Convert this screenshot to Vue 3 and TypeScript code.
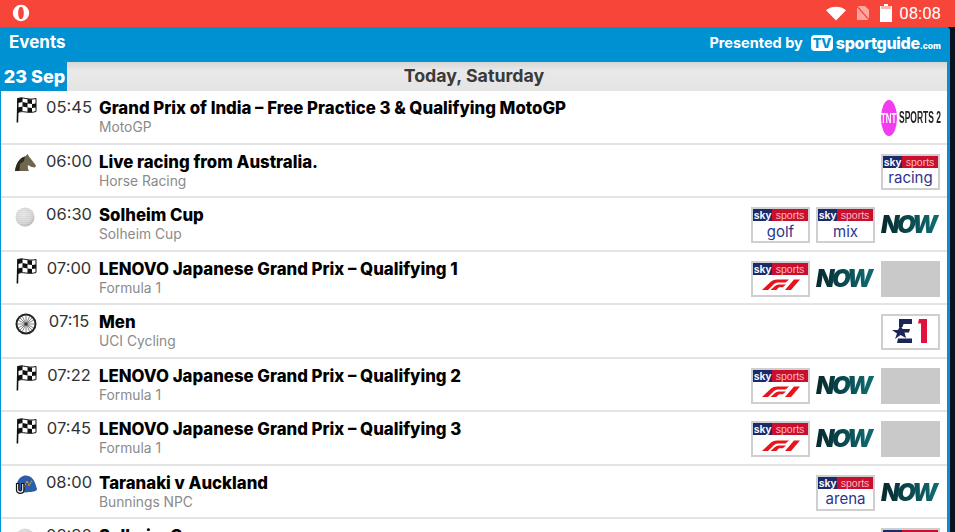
<template>
  <div class="screen">
    <div class="status-bar">
      <svg class="opera" viewBox="0 0 18 18" width="18" height="18">
        <path fill="#fff" fill-rule="evenodd" d="M9 0.800a8.200 8.200 0 1 0 0 16.400a8.200 8.200 0 0 0 0-16.400zM9 2.800c-1.800 0-2.800 2.900-2.800 6.200s1 6.200 2.800 6.200s2.800-2.900 2.800-6.200s-1-6.200-2.800-6.200z" />
      </svg>
      <div class="status-right">
        <svg viewBox="0 0 20 16" width="20" height="16"><path fill="#fff" d="M0 5.200C5.500 0.600 14.500 0.600 20 5.200L10 15.500z" /></svg>
        <svg class="nosim" viewBox="0 0 14 16" width="14" height="16">
          <path fill="#ffa79f" d="M1 1h8l4 4v10H1z" />
          <path stroke="#f4443a" stroke-width="1.200" d="M0 0L14 16" />
        </svg>
        <svg viewBox="0 0 12 18" width="12" height="18"><path fill="#fff" d="M4 0h4v2h4v16H0V2h4z" /><path fill="#ffb5ae" d="M1 2h10v3H1z" /></svg>
        <span class="clock">08:08</span>
      </div>
    </div>

    <div class="panel">
      <header class="panel-head">
        <span class="events">Events</span>
        <div class="presented">
          <span>Presented by</span>
          <span class="tv">TV</span>
          <span class="guide">sportguide<small>.com</small></span>
        </div>
      </header>

      <div class="date-row">
        <div class="date-tag">23 Sep</div>
        <div class="date-title">Today, Saturday</div>
      </div>

      <div v-for="ev in events" :key="ev.time + ev.title" class="event">
        <div class="sport-icon">
          <svg v-if="ev.icon === 'flag'" viewBox="0 0 22 26" width="22" height="26">
            <path d="M3 1L2.400 25.500" stroke="#111" stroke-width="1.600" fill="none" />
            <path fill="#fff" stroke="#111" stroke-width="1" d="M3 1.500C8 -0.500 13 3.500 21 1.500V14.500C13 17 8 13 3 15.500z" />
            <path fill="#111" d="M3 1.500l4.500-1v4.500l-4.500 1zM12.500 2l4.500.400v4.600l-4.500-.500zM7.500 5l5 1v4.500l-5-1zM17 7l4-.500v4l-4 .500zM3 10.500l4.500-1v4.200l-4.500 1.800zM12.500 10.500l4.500.500v4.300l-4.500-.300z" />
          </svg>
          <svg v-else-if="ev.icon === 'horse'" viewBox="0 0 22 20" width="22" height="20">
            <path fill="#6f674d" d="M0 17C1 10 4 4 10 2.500L12.500 0L14 2.500L21 11.500L20 13.500L16.500 13L13 11C12.500 13 13 15.500 14 17z" />
            <path fill="#2e2a20" d="M0 17C1 10 4 4 10 2.500L9 7L5 10L4.500 17z" />
          </svg>
          <svg v-else-if="ev.icon === 'golf'" viewBox="0 0 20 20" width="20" height="20">
            <defs>
              <radialGradient id="ball" cx="40%" cy="35%" r="70%">
                <stop offset="0" stop-color="#fbfbfb" />
                <stop offset="0.7" stop-color="#e6e6e6" />
                <stop offset="1" stop-color="#bdbdbd" />
              </radialGradient>
              <pattern id="dimple" width="2" height="2" patternUnits="userSpaceOnUse">
                <circle cx="1" cy="1" r="0.600" fill="#999" />
              </pattern>
            </defs>
            <circle cx="10" cy="10" r="9.500" fill="url(#ball)" />
            <circle cx="10" cy="10" r="9.500" fill="url(#dimple)" />
          </svg>
          <svg v-else-if="ev.icon === 'wheel'" viewBox="0 0 22 22" width="22" height="22">
            <circle cx="11" cy="11" r="9.500" fill="#fff" stroke="#222" stroke-width="2" />
            <path stroke="#666" stroke-width="0.800" d="M11 2v18M2 11h18M4.600 4.600l12.800 12.800M17.400 4.600L4.600 17.400M7 2.800l8 16.400M15 2.800L7 19.200M2.800 7l16.400 8M19.200 7L2.800 15" />
            <circle cx="11" cy="11" r="1.600" fill="#333" />
          </svg>
          <svg v-else viewBox="0 0 22 20" width="22" height="20">
            <path fill="#2d5da8" d="M2 8C5 -1 13 -1 17 3C20 6 21 11 22 14C22 16 19 17 14 17C10 18 6 17 2 15z" />
            <path fill="none" stroke="#f5a11d" stroke-width="1.300" stroke-dasharray="1.500 1" d="M9 12L12 6L14 10L17 6" />
            <path fill="#fff" stroke="#111" stroke-width="1.200" d="M1.500 8.500h2.300v6c0 2 2.800 2 2.800 0v-6h2.300v6.500c0 4.500-7.400 4.500-7.400 0z" />
          </svg>
        </div>
        <div class="time">{{ ev.time }}</div>
        <div class="info">
          <div class="title">{{ ev.title }}</div>
          <div class="sub">{{ ev.sub }}</div>
        </div>
        <div class="channels">
          <template v-for="(ch, i) in ev.channels" :key="i">
            <div v-if="ch === 'now'" class="logo now"><span>NOW</span></div>
            <div v-else-if="ch === 'blank'" class="logo blank"></div>
            <div v-else-if="ch === 'tnt'" class="logo tnt">
              <span class="tnt-oval"><span class="tnt-word">TNT</span></span>
              <span class="tnt-text">SPORTS 2</span>
            </div>
            <div v-else-if="ch === 'e1'" class="logo boxed e1">
              <svg viewBox="0 0 55 32" width="55" height="32">
                <path fill="#1c2557" d="M16 3H29V8H20.500L19.500 11H16zM15 22.500H29V27H14z" />
                <path fill="#1c2557" d="M9 14H15L17.500 9L19.500 13H27L26 16.500H21.500L23 22L17.500 19L12 23L14 17.500z" />
                <path fill="#e0123d" d="M36 3H44V27H38V7.500H35z" />
              </svg>
            </div>
            <div v-else class="logo boxed sky">
              <div class="sky-top">
                <span class="sky-word">sky</span>
                <span class="sports-word">sports</span>
              </div>
              <div class="sky-name">
                <svg v-if="ch === 'f1'" viewBox="0 0 38 11" width="38" height="11">
                  <path fill="#e8141c" d="M0 11L9 2.500Q11.500 0.500 15 0.500H27L23.500 3.500H15.500Q13.500 3.500 12 5L6 11zM8.500 11L13 7Q14.500 5.500 16.500 5.500H24L20.800 8.300H17L14.300 11zM23 11L32 0.500H38L29 11z" />
                </svg>
                <template v-else>{{ ch }}</template>
              </div>
            </div>
          </template>
        </div>
      </div>
    </div>
  </div>
</template>

<script setup lang="ts">
interface EventRow {
  icon: string;
  time: string;
  title: string;
  sub: string;
  channels: string[];
}

const events: EventRow[] = [
  { icon: 'flag', time: '05:45', title: 'Grand Prix of India – Free Practice 3 & Qualifying MotoGP', sub: 'MotoGP', channels: ['tnt'] },
  { icon: 'horse', time: '06:00', title: 'Live racing from Australia.', sub: 'Horse Racing', channels: ['racing'] },
  { icon: 'golf', time: '06:30', title: 'Solheim Cup', sub: 'Solheim Cup', channels: ['golf', 'mix', 'now'] },
  { icon: 'flag', time: '07:00', title: 'LENOVO Japanese Grand Prix – Qualifying 1', sub: 'Formula 1', channels: ['f1', 'now', 'blank'] },
  { icon: 'wheel', time: '07:15', title: 'Men', sub: 'UCI Cycling', channels: ['e1'] },
  { icon: 'flag', time: '07:22', title: 'LENOVO Japanese Grand Prix – Qualifying 2', sub: 'Formula 1', channels: ['f1', 'now', 'blank'] },
  { icon: 'flag', time: '07:45', title: 'LENOVO Japanese Grand Prix – Qualifying 3', sub: 'Formula 1', channels: ['f1', 'now', 'blank'] },
  { icon: 'rugby', time: '08:00', title: 'Taranaki v Auckland', sub: 'Bunnings NPC', channels: ['arena', 'now'] },
  { icon: 'golf', time: '08:30', title: 'Solheim Cup', sub: 'Solheim Cup', channels: ['golf'] }
];
</script>

<style>
html,
body {
  margin: 0;
  height: 100%;
  overflow: hidden;
  background: #0b1020;
}
</style>

<style scoped>
.screen {
  width: 955px;
  height: 532px;
  overflow: hidden;
  font-family: Inter, Roboto, "Liberation Sans", sans-serif;
}

.status-bar {
  height: 27px;
  background: #f7453a;
  display: flex;
  align-items: center;
  justify-content: space-between;
  padding: 0 14px 1px 12px;
  box-sizing: border-box;
}

.opera {
  display: block;
}

.status-right {
  display: flex;
  align-items: center;
  gap: 10px;
}

.clock {
  color: #fff;
  font-family: Roboto, sans-serif;
  font-size: 16.800px;
  margin-left: -3px;
}

.panel {
  width: 950px;
  box-sizing: border-box;
  background: #fff;
  border-left: 1px solid #0091d3;
  border-right: 3px solid #0091d3;
  border-top-right-radius: 4px;
}

.panel-head {
  height: 35px;
  background: #0091d3;
  display: flex;
  align-items: center;
  justify-content: space-between;
  color: #fff;
  padding: 0 6px 5px 8px;
  box-sizing: border-box;
}

.events {
  font-size: 17px;
  font-weight: 700;
}

.presented {
  display: flex;
  align-items: center;
  font-size: 14.500px;
  font-weight: 700;
  padding-top: 1px;
}

.tv {
  background: #fff;
  color: #0091d3;
  border-radius: 4px;
  font-size: 13px;
  font-weight: 800;
  line-height: 16px;
  height: 16px;
  width: 22px;
  text-align: center;
  margin-left: 8px;
  letter-spacing: -0.500px;
}

.guide {
  font-size: 16px;
  font-weight: 800;
  letter-spacing: -0.300px;
  margin-left: 3px;
}

.guide small {
  font-size: 8.500px;
  letter-spacing: 0;
}

.date-row {
  height: 29px;
  display: flex;
  margin-left: -1px;
  background: linear-gradient(#d6d6d6, #e9e9e9 30%, #e4e4e4);
}

.date-tag {
  width: 67px;
  flex: none;
  padding-left: 2px;
  box-sizing: border-box;
  background: #0091d3;
  color: #fff;
  font-size: 18px;
  font-weight: 800;
  line-height: 30px;
  text-align: center;
  white-space: nowrap;
}

.date-title {
  flex: 1;
  padding-right: 66px;
  text-align: center;
  font-size: 17.800px;
  font-weight: 700;
  line-height: 28px;
  color: #3a3a3a;
}

.event {
  height: 53.500px;
  box-sizing: border-box;
  border-bottom: 2px solid #e4e4e4;
  display: flex;
  align-items: flex-start;
}

.sport-icon {
  width: 38px;
  height: 38px;
  padding-left: 14px;
  box-sizing: border-box;
  flex: none;
  display: flex;
  align-items: center;
}

.time {
  width: 60px;
  flex: none;
  margin-top: 6px;
  text-align: center;
  font-size: 16.500px;
  line-height: 20px;
  color: #333;
}

.info {
  flex: 1;
  min-width: 0;
  padding-top: 7px;
}

.title {
  font-size: 16.800px;
  line-height: 20px;
  font-weight: 800;
  color: #000;
}

.sub {
  font-size: 13.800px;
  line-height: 17px;
  margin-top: 1px;
  color: #8a8a8a;
}

.channels {
  display: flex;
  flex: none;
  gap: 6px;
  padding: 9px 7px 0 0;
}

.logo {
  width: 59px;
  height: 36px;
  flex: none;
  box-sizing: border-box;
}

.blank {
  background: #c9c9c9;
}

.now {
  font-size: 24px;
  font-weight: 900;
  font-style: italic;
  letter-spacing: -2.500px;
  line-height: 36px;
  white-space: nowrap;
}

.now span {
  display: inline-block;
  padding: 0 4px 0 0;
  background: linear-gradient(90deg, #06282c, #0f6d73);
  -webkit-background-clip: text;
  background-clip: text;
  color: transparent;
}

.boxed {
  background: #fff;
  border: 2px solid #cfcfcf;
}

.sky-top {
  display: flex;
  height: 12px;
  font-family: "Liberation Sans", sans-serif;
  font-size: 10.500px;
  line-height: 12px;
  color: #fff;
}

.sky-word {
  width: 19px;
  background: #1b2a6b;
  font-weight: 700;
  text-align: center;
}

.sports-word {
  flex: 1;
  background: #c8102e;
  text-align: center;
  color: #ffb9bf;
}

.sky-name {
  height: 20px;
  font-size: 15px;
  line-height: 19px;
  text-align: center;
  color: #2b3590;
  display: flex;
  align-items: center;
  justify-content: center;
}

.e1 svg {
  display: block;
}

.tnt {
  display: flex;
  align-items: center;
}

.tnt-oval {
  width: 16px;
  height: 36px;
  border-radius: 50%;
  background: #f23cf0;
  color: #fff;
  font-family: "Liberation Sans", sans-serif;
  font-size: 11px;
  line-height: 36px;
  font-weight: 700;
  flex: none;
  display: flex;
  justify-content: center;
}

.tnt-word {
  display: block;
  flex: none;
  transform: scale(0.72, 1.3);
}

.tnt-text {
  display: block;
  width: 71px;
  flex: none;
  margin-left: 2px;
  font-family: "Liberation Sans", sans-serif;
  font-size: 16px;
  font-weight: 700;
  white-space: nowrap;
  transform: scaleX(0.53);
  transform-origin: left center;
  color: #222;
}
</style>
